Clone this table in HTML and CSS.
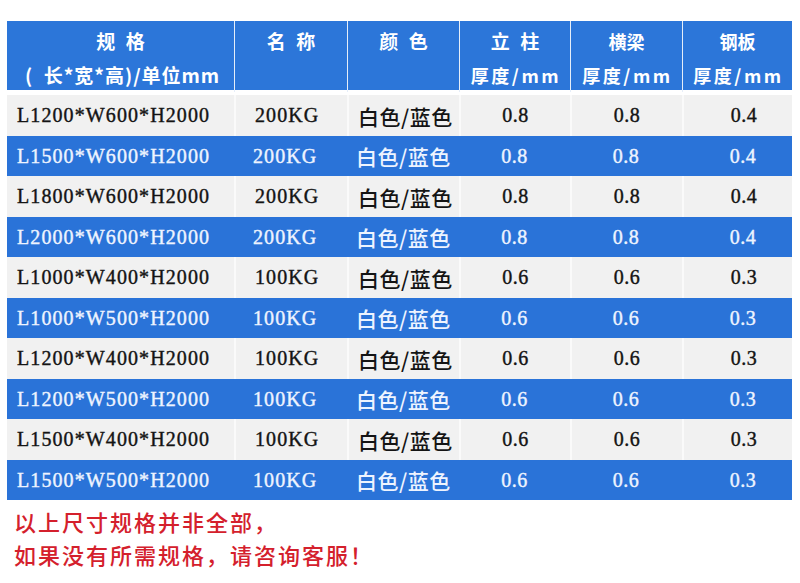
FILE: index.html
```html
<!DOCTYPE html>
<html lang="zh-CN">
<head>
<meta charset="utf-8">
<title>规格表</title>
<link rel="stylesheet" href="styles.css">
</head>
<body>
<div class="sheet">
  <div class="thead">
    <div class="th c1"><span class="top">规 格</span><span class="sub">(&nbsp; 长*宽*高)/单位mm</span></div>
    <div class="th"><span class="top">名 称</span></div>
    <div class="th"><span class="top">颜 色</span></div>
    <div class="th"><span class="top">立 柱</span><span class="sub sp">厚度/mm</span></div>
    <div class="th"><span class="sm">横梁</span><span class="sub sp">厚度/mm</span></div>
    <div class="th"><span class="sm">钢板</span><span class="sub sp">厚度/mm</span></div>
  </div>
  <div class="tbody">
    <div class="row gray h41"><div class="td spec">L1200*W600*H2000</div><div class="td kg">200KG</div><div class="td col">白色/蓝色</div><div class="td num">0.8</div><div class="td num">0.8</div><div class="td num n6">0.4</div></div>
    <div class="row blue h40"><div class="td spec">L1500*W600*H2000</div><div class="td kg">200KG</div><div class="td col">白色/蓝色</div><div class="td num">0.8</div><div class="td num">0.8</div><div class="td num n6">0.4</div></div>
    <div class="row gray h41"><div class="td spec">L1800*W600*H2000</div><div class="td kg">200KG</div><div class="td col">白色/蓝色</div><div class="td num">0.8</div><div class="td num">0.8</div><div class="td num n6">0.4</div></div>
    <div class="row blue h40"><div class="td spec">L2000*W600*H2000</div><div class="td kg">200KG</div><div class="td col">白色/蓝色</div><div class="td num">0.8</div><div class="td num">0.8</div><div class="td num n6">0.4</div></div>
    <div class="row gray h41"><div class="td spec">L1000*W400*H2000</div><div class="td kg">100KG</div><div class="td col">白色/蓝色</div><div class="td num">0.6</div><div class="td num">0.6</div><div class="td num n6">0.3</div></div>
    <div class="row blue h40"><div class="td spec">L1000*W500*H2000</div><div class="td kg">100KG</div><div class="td col">白色/蓝色</div><div class="td num">0.6</div><div class="td num">0.6</div><div class="td num n6">0.3</div></div>
    <div class="row gray h41"><div class="td spec">L1200*W400*H2000</div><div class="td kg">100KG</div><div class="td col">白色/蓝色</div><div class="td num">0.6</div><div class="td num">0.6</div><div class="td num n6">0.3</div></div>
    <div class="row blue h40"><div class="td spec">L1200*W500*H2000</div><div class="td kg">100KG</div><div class="td col">白色/蓝色</div><div class="td num">0.6</div><div class="td num">0.6</div><div class="td num n6">0.3</div></div>
    <div class="row gray h41"><div class="td spec">L1500*W400*H2000</div><div class="td kg">100KG</div><div class="td col">白色/蓝色</div><div class="td num">0.6</div><div class="td num">0.6</div><div class="td num n6">0.3</div></div>
    <div class="row blue h40"><div class="td spec">L1500*W500*H2000</div><div class="td kg">100KG</div><div class="td col">白色/蓝色</div><div class="td num">0.6</div><div class="td num">0.6</div><div class="td num n6">0.3</div></div>
  </div>
  <div class="note">
    <p>以上尺寸规格并非全部，</p>
    <p>如果没有所需规格，请咨询客服！</p>
  </div>
</div>
</body>
</html>
```
FILE: styles.css
```css
html, body {
  margin: 0;
  padding: 0;
  background: #ffffff;
}
.sheet {
  width: 785px;
  padding: 21px 8px 0 7px;
}
.thead,
.row {
  display: grid;
  grid-template-columns: 227px 113px 112px 111px 112px 110px;
}
.thead {
  height: 69px;
  background: #2c76d9;
}
.th {
  display: flex;
  flex-direction: column;
  align-items: center;
  padding-top: 3px;
  color: #ffffff;
  font-family: "Noto Sans CJK SC", "Noto Sans", sans-serif;
  font-weight: 700;
  font-size: 19px;
  line-height: 34px;
  border-left: 1px solid #e6eef9;
}
.th.c1 {
  border-left: none;
}
.th .top {
  letter-spacing: 3px;
  padding-left: 3px;
}
.th .sm {
  font-size: 18px;
}
.th .sub {
  font-size: 19px;
  letter-spacing: 1px;
  padding-left: 4px;
}
.th .sp {
  font-size: 18px;
  letter-spacing: 2.6px;
  padding-left: 2px;
}
.tbody {
  margin-top: 5px;
}
.h41 { height: 41px; }
.h40 { height: 40px; }
.row.gray {
  background: #f1f1f1;
  color: #141414;
}
.row.blue {
  background: #2a73d8;
  color: #eef4ff;
}
.td {
  display: flex;
  align-items: center;
  font-family: "Liberation Serif", "Noto Sans CJK SC", serif;
  font-weight: 400;
  font-size: 20px;
  letter-spacing: 1.1px;
  -webkit-text-stroke: 0.4px currentColor;
}
.row.gray .td + .td {
  border-left: 2px solid #fafafa;
}
.td.spec {
  padding-left: 10px;
}
.td.kg {
  padding-left: 19px;
}
.td.col {
  padding-left: 9px;
  font-family: "Noto Sans CJK SC", sans-serif;
  font-weight: 500;
  font-size: 21px;
  letter-spacing: 0.5px;
  -webkit-text-stroke: 0;
}
.td.num {
  justify-content: center;
  letter-spacing: 0.5px;
}
.td.n6 {
  padding-left: 12px;
}
.note {
  margin-top: 5px;
  padding-left: 7px;
  color: #d4202c;
  font-family: "Noto Sans CJK SC", sans-serif;
  font-weight: 500;
  font-size: 22px;
  letter-spacing: 2px;
  line-height: 33px;
}
.note p {
  margin: 0;
}
```
